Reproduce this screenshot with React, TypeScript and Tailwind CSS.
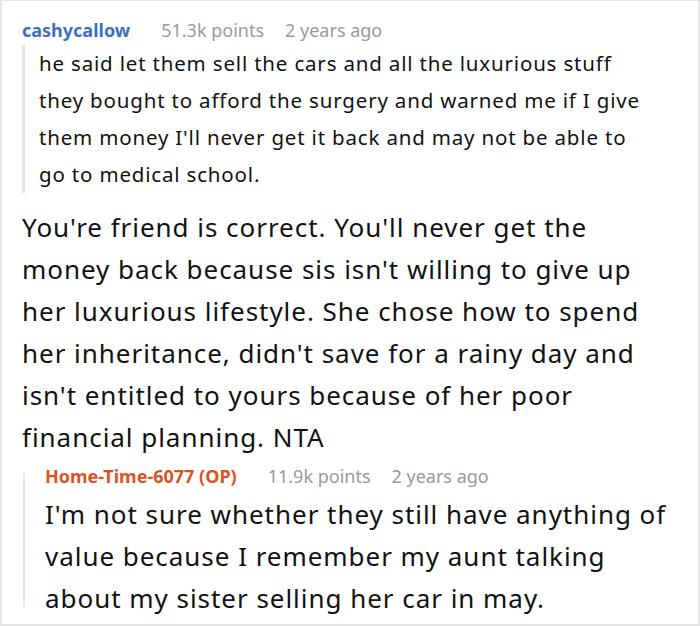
export default function App() {
  return (
    <div className="h-[626px] w-[700px] overflow-hidden border-2 border-t border-[#e6e6e6] bg-white font-['Noto_Sans',sans-serif] text-[#111]">
      <div className="pl-[20px] pt-[16px]">
        <div className="flex items-baseline text-[18px] leading-[26px]">
          <span className="font-bold text-[#3d6fc0]">cashycallow</span>
          <span className="ml-[31px] text-[#999]">51.3k points</span>
          <span className="ml-[21px] text-[#999]">2 years ago</span>
        </div>
        <div className="mt-[2px] w-[632px] border-l-[3px] border-[#e2e2e2] pl-[14px]">
          <p className="text-[20.5px] leading-[37px] tracking-[0.04em]">
            he said let them sell the cars and all the luxurious stuff they
            bought to afford the surgery and warned me if I give them money
            I'll never get it back and may not be able to go to medical school.
          </p>
        </div>
        <p className="mt-[13px] w-[644px] text-[26px] leading-[42px] tracking-[0.037em]">
          You're friend is correct. You'll never get the money back because
          sis isn't willing to give up her luxurious lifestyle. She chose how to
          spend her inheritance, didn't save for a rainy day and isn't entitled
          to yours because of her poor financial planning. NTA
        </p>
        <div className="mt-[5px] flex">
          <div className="mb-[12px] ml-[1px] mt-[10px] w-[2px] shrink-0 bg-[#e6e6e6]" />
          <div className="w-[652px] pl-[20px]">
            <div className="flex items-baseline text-[18px] leading-[26px]">
              <span className="font-bold text-[#d9531e]">Home-Time-6077 (OP)</span>
              <span className="ml-[31px] text-[#999]">11.9k points</span>
              <span className="ml-[21px] text-[#999]">2 years ago</span>
            </div>
            <p className="mt-[4px] text-[26px] leading-[42px] tracking-[0.037em]">
              I'm not sure whether they still have anything of value because I
              remember my aunt talking about my sister selling her car in may.
            </p>
          </div>
        </div>
      </div>
    </div>
  );
}
